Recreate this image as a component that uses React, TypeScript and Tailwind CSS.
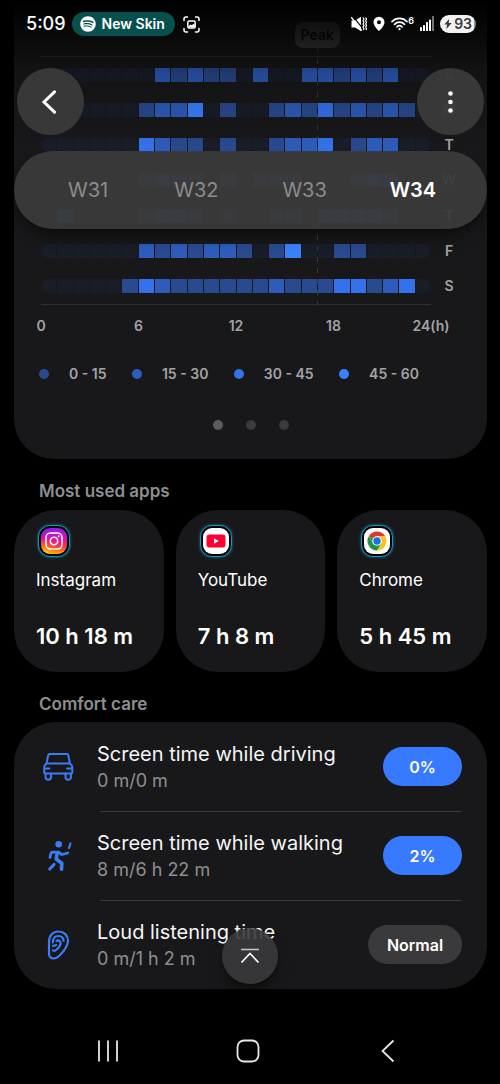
import React, { useState } from 'react';
import { FaSpotify } from 'react-icons/fa';

// One digit per hour: 0 = no use, 1-4 = legend buckets
const usage = [
  { day: 'S', hours: '000000021211020022121200' },
  { day: 'M', hours: '000000122401001213121210' },
  { day: 'T', hours: '000000321101001223012200' },
  { day: 'W', hours: '000000121101011100013200' },
  { day: 'T', hours: '030000122101001102222100' },
  { day: 'F', hours: '000000212122101400110000' },
  { day: 'S', hours: '000001321111112111331230' },
];

const levelColors = ['bg-[#181d28]', 'bg-[#294a8f]', 'bg-[#2d5cbb]', 'bg-[#3472ec]', 'bg-[#3a80ff]'];
const legend = ['0 - 15', '15 - 30', '30 - 45', '45 - 60'];
const ticks = ['0', '6', '12', '18', '24(h)'];
const weeks = ['W31', 'W32', 'W33', 'W34'];
const peakHour = 17;

function StatusBar() {
  return (
    <div className="flex h-6 items-center justify-between pl-[26px] pr-6 text-white">
      <div className="flex items-center">
        <span className="text-lg font-medium leading-6">5:09</span>
        <span className="ml-1.5 flex h-6 items-center gap-1.5 rounded-full bg-[#07504d] pl-2 pr-2.5">
          <FaSpotify size={16} />
          <span className="text-sm font-semibold leading-6">New Skin</span>
        </span>
        <svg className="ml-2" width="17" height="17" viewBox="0 0 17 17" fill="none" stroke="currentColor" strokeWidth="1.5" strokeLinecap="round">
          <path d="M1 4.500V3a2 2 0 0 1 2-2h1.500M12.500 1H14a2 2 0 0 1 2 2v1.500M16 12.500V14a2 2 0 0 1-2 2h-1.500M4.500 16H3a2 2 0 0 1-2-2v-1.500" />
          <rect x="4.800" y="5" width="7.400" height="7" rx="1.500" />
          <path d="M5.500 10.200l2-1.800 1.400.9 1.600-1.600 1.400 1.300v2.200H5.500z" fill="currentColor" stroke="none" />
        </svg>
      </div>
      <div className="flex items-center gap-1.5">
        <svg width="16" height="16" viewBox="0 0 16 16" fill="none" stroke="currentColor" strokeWidth="1.5">
          <path d="M.5 4.500h3.700L10 .8v14.400L4.200 11.500H.5z" fill="currentColor" stroke="none" />
          <path d="M1.800.2l10.500 13" stroke="#050505" strokeWidth="1.200" />
          <path d="M.2 1.200L10.800 14.600" strokeWidth="1.400" />
          <path d="M12 1.500l1 1.600-1 1.600 1 1.600-1 1.600 1 1.600-1 1.600 1 1.600-.6 1.400M14.600 1.500l1 1.600-1 1.600 1 1.600-1 1.600 1 1.600-1 1.600 1 1.600-.6 1.400" strokeWidth="1.200" />
        </svg>
        <svg width="12" height="16" viewBox="0 0 12 16">
          <path d="M6 .8A5.400 5.400 0 0 0 .5 6.200C.5 10.200 6 15 6 15s5.500-4.800 5.500-8.800A5.400 5.400 0 0 0 6 .8zm0 3.500a2 2 0 1 1 0 4 2 2 0 0 1 0-4z" fill="currentColor" />
        </svg>
        <span className="flex items-start">
          <svg width="17" height="16" viewBox="0 0 17 16" fill="none" stroke="currentColor" strokeWidth="1.700" strokeLinecap="round">
            <path d="M1 5.600a10.500 10.500 0 0 1 15 0M3.500 8.300a7 7 0 0 1 10 0M6 10.900a3.600 3.600 0 0 1 5 0" />
            <circle cx="8.500" cy="13.200" r="1.100" fill="currentColor" stroke="none" />
          </svg>
          <span className="text-[9px] font-semibold leading-[9px]">6</span>
        </span>
        <svg width="14" height="16" viewBox="0 0 14 16" fill="currentColor">
          <rect x="0" y="11" width="2" height="4" rx=".5" />
          <rect x="3" y="9" width="2" height="6" rx=".5" />
          <rect x="6" y="6" width="2" height="9" rx=".5" />
          <rect x="9" y="3.500" width="2" height="11.500" rx=".5" />
          <rect x="12" y="0" width="2" height="15" rx=".5" opacity=".45" />
        </svg>
        <span className="flex h-[18px] items-center gap-0.5 rounded-full bg-linear-to-r from-[#f2f2f2] from-94% to-[#8d8d8d] to-94% px-1 text-[#3a3a3a]">
          <svg width="8" height="10" viewBox="0 0 8 10">
            <path d="M5.200 0L.2 5.600h2.900L2.400 10l5.400-6H4.700z" fill="currentColor" />
          </svg>
          <span className="text-sm font-semibold leading-[18px]">93</span>
        </span>
      </div>
    </div>
  );
}

function UsageChart() {
  return (
    <section className="rounded-b-[40px] bg-[#18181a] pb-[29px] pt-[22px]">
      <div className="pl-[27px] pr-5">
        <div className="relative mr-9 pt-[34px]">
          {/* Peak marker */}
          <div
            className="absolute inset-y-0 z-10 flex w-0 flex-col items-center"
            style={{ left: `${(peakHour / 24) * 100}%` }}
          >
            <span className="rounded-lg bg-[#3e3e40] px-1.5 text-sm font-semibold leading-[26px] text-[#0a0a0a]">Peak</span>
            <span className="w-px flex-1 bg-[repeating-linear-gradient(to_bottom,#38383a_0_5px,transparent_5px_11px)]" />
          </div>
          <div className="grid h-[249px] grid-rows-7 border-y border-[#2e2e30]">
            {usage.map((row, i) => (
              <div key={i} className="-mr-9 flex items-center">
                <div className="grid h-3.5 flex-1 grid-cols-[repeat(24,minmax(0,1fr))] gap-px overflow-hidden rounded-full">
                  {row.hours.split('').map((level, h) => (
                    <span key={h} className={levelColors[Number(level)]} />
                  ))}
                </div>
                <span className="w-9 text-center text-sm font-semibold leading-5 text-[#a3a3a5]">{row.day}</span>
              </div>
            ))}
          </div>
        </div>
        <div className="mr-9 mt-[11px] flex justify-between text-sm font-semibold leading-5 text-[#a3a3a5]">
          {ticks.map(t => (
            <span key={t} className="flex w-0 justify-center">{t}</span>
          ))}
        </div>
      </div>

      {/* Legend */}
      <div className="mt-7 flex justify-between pl-[25px] pr-[68px]">
        {legend.map((label, i) => (
          <div key={label} className="flex items-center gap-5">
            <span className={`size-2.5 rounded-full ${levelColors[i + 1]}`} />
            <span className="text-sm font-semibold leading-5 text-[#a3a3a5]">{label}</span>
          </div>
        ))}
      </div>

      {/* Page dots */}
      <div className="mt-9 flex justify-center gap-[23px]">
        <span className="size-2.5 rounded-full bg-[#5c5c5e]" />
        <span className="size-2.5 rounded-full bg-[#3a3a3c]" />
        <span className="size-2.5 rounded-full bg-[#3a3a3c]" />
      </div>
    </section>
  );
}

function InstagramIcon() {
  return (
    <svg width="26" height="26" viewBox="0 0 26 26" fill="none">
      <defs>
        <linearGradient id="igBase" x1="0" y1="0" x2="0" y2="1">
          <stop offset="0" stopColor="#8a1ff0" />
          <stop offset=".45" stopColor="#e6109c" />
          <stop offset=".75" stopColor="#ff3d3d" />
          <stop offset="1" stopColor="#ffb300" />
        </linearGradient>
        <radialGradient id="igGlow" cx=".1" cy="1" r=".6">
          <stop offset="0" stopColor="#ffd500" />
          <stop offset="1" stopColor="#ff7a00" stopOpacity="0" />
        </radialGradient>
      </defs>
      <rect width="26" height="26" rx="9" fill="url(#igBase)" />
      <rect width="26" height="26" rx="9" fill="url(#igGlow)" />
      <rect x="5" y="5" width="16" height="16" rx="4.500" stroke="#fff" strokeWidth="1.500" />
      <circle cx="13" cy="13" r="3.700" stroke="#fff" strokeWidth="1.500" />
      <circle cx="17.700" cy="8.300" r="1" fill="#fff" />
    </svg>
  );
}

function YouTubeIcon() {
  return (
    <svg width="26" height="26" viewBox="0 0 26 26">
      <rect width="26" height="26" rx="9" fill="#fff" />
      <rect x="3.500" y="6.500" width="19" height="13" rx="3" fill="#ff0033" />
      <path d="M11 10.300v5.400l4.700-2.700z" fill="#fff" />
    </svg>
  );
}

function ChromeIcon() {
  return (
    <svg width="26" height="26" viewBox="0 0 26 26">
      <rect width="26" height="26" rx="9" fill="#fff" />
      <path d="M13 13L4.770 8.250A9.500 9.500 0 0 1 21.230 8.250H13z" fill="#db3a2e" />
      <path d="M13 13L21.230 8.250A9.500 9.500 0 0 1 13 22.500l4.110-7.120z" fill="#fcc31e" />
      <path d="M13 8.250h8.230L17.110 15.380 13 13z" fill="#fcc31e" />
      <path d="M13 13l4.110 2.380L13 22.500A9.500 9.500 0 0 1 4.770 8.250l4.120 7.130z" fill="#229342" />
      <path d="M4.770 8.250l4.120 7.130L13 13z" fill="#229342" />
      <circle cx="13" cy="13" r="4.750" fill="#fff" />
      <circle cx="13" cy="13" r="3.700" fill="#1a6fe8" />
    </svg>
  );
}

const apps = [
  { name: 'Instagram', time: '10 h 18 m', icon: <InstagramIcon /> },
  { name: 'YouTube', time: '7 h 8 m', icon: <YouTubeIcon /> },
  { name: 'Chrome', time: '5 h 45 m', icon: <ChromeIcon /> },
];

function CarIcon() {
  return (
    <svg width="32" height="32" viewBox="0 0 32 32" fill="none" stroke="#3b7cf5" strokeWidth="2" strokeLinejoin="round" strokeLinecap="round">
      <path d="M4.500 12.500L6.200 4.300Q6.500 3 7.800 3h16.900q1.300 0 1.600 1.300L28 12.500z" />
      <path d="M4.500 12.500Q2.200 14 2.200 16.500v4.700q0 1.300 1.300 1.300H29q1.300 0 1.300-1.300v-4.700Q30.300 14 28 12.500" />
      <path d="M2.500 17.500H7.500M30 17.500H25" />
      <path d="M3.500 22.500V26a2.700 2.700 0 0 0 5.500 0v-3.500M23.500 22.500V26a2.700 2.700 0 0 0 5.500 0v-3.500" />
    </svg>
  );
}

function WalkIcon() {
  return (
    <svg width="32" height="32" viewBox="0 0 32 32" fill="none" stroke="#3b7cf5" strokeWidth="3" strokeLinejoin="round" strokeLinecap="round">
      <circle cx="16.700" cy="4.200" r="3.300" fill="#3b7cf5" stroke="none" />
      <path d="M8 17.500l.8-3.600q.4-1.700 2.200-1.700h5.500l3.300 2.300 6-1.500" strokeWidth="2.800" />
      <path d="M15.300 13l-1.100 6 5.600 4.300-.3 6" strokeWidth="3.600" />
      <path d="M12 24.500L7.800 29" strokeWidth="3.200" />
      <path d="M28.500 3.500l-1.500 4.500" strokeWidth="2.200" />
    </svg>
  );
}

function EarIcon() {
  return (
    <svg width="32" height="32" viewBox="0 0 32 32" fill="none" stroke="#3b7cf5" strokeWidth="2.200" strokeLinejoin="round" strokeLinecap="round">
      <path d="M7 13C7 6.500 11 2.500 16.500 2.500S26 6.500 26 11.500c0 4-1.800 7-4.500 10.500-2.800 3.700-5.500 7.500-9.500 7.500-3.200 0-5-2-5-5z" />
      <path d="M10.800 13.500C10.800 9.500 13 7 16.500 7c3 0 5.200 2 5 4.800" />
      <path d="M14.500 12c2.800-1.600 4.800.8 3.900 3.700-.8 2.700-2.900 4.300-4.200 5.300-1.200.9-2.600.8-3.200.2" />
      <path d="M11 17l3.200-1" />
    </svg>
  );
}

const careItems = [
  { title: 'Screen time while driving', detail: '0 m/0 m', badge: '0%', icon: <CarIcon />, badgeStyle: 'w-[79px] bg-[#387aff]' },
  { title: 'Screen time while walking', detail: '8 m/6 h 22 m', badge: '2%', icon: <WalkIcon />, badgeStyle: 'w-[79px] bg-[#387aff]' },
  { title: 'Loud listening time', detail: '0 m/1 h 2 m', badge: 'Normal', icon: <EarIcon />, badgeStyle: 'w-[94px] bg-[#3a3a3c]' },
];

export default function App() {
  const [week, setWeek] = useState('W34');

  return (
    <div className="relative flex min-h-screen flex-col bg-black font-['Inter',sans-serif]">
      <main className="pl-3.5 pr-[13px]">
        <UsageChart />

        <h2 className="mt-5 px-[25px] text-[17px] font-semibold leading-6 text-[#8f8f91]">Most used apps</h2>
        <div className="mt-[7px] grid grid-cols-3 gap-3">
          {apps.map(app => (
            <button key={app.name} type="button" className="rounded-[42px] bg-[#18181a] px-[22px] pb-[22px] pt-[15px] text-left text-white">
              <span className="ml-0.5 flex size-8 items-center justify-center rounded-xl border border-[#1f93b8] bg-black shadow-[0_0_3px_#1286ad]">
                {app.icon}
              </span>
              <span className="mt-[11px] block text-[17px] leading-6">{app.name}</span>
              <span className="mt-[30px] block whitespace-nowrap text-[22px] font-semibold leading-7">{app.time}</span>
            </button>
          ))}
        </div>

        <h2 className="mt-5 px-[25px] text-[17px] font-semibold leading-6 text-[#8f8f91]">Comfort care</h2>
        <ul className="mt-1.5 rounded-[42px] bg-[#18181a] pl-7 pr-[25px]">
          {careItems.map((item, i) => (
            <li key={item.title} className="relative flex h-[89px] items-center">
              {i > 0 && <span className="absolute left-[58px] right-0 top-0 h-px bg-[#3a3a3c]" />}
              {item.icon}
              <div className="ml-[23px] flex-1 pt-0.5">
                <p className="text-xl leading-[26px] text-[#f5f5f5]">{item.title}</p>
                <p className="text-lg leading-7 text-[#8f8f91]">{item.detail}</p>
              </div>
              <span className={`flex h-[39px] items-center justify-center rounded-full text-base font-semibold text-white ${item.badgeStyle}`}>
                {item.badge}
              </span>
            </li>
          ))}
        </ul>
      </main>

      {/* System navigation */}
      <nav className="mt-auto grid grid-cols-[216px_64px_216px] justify-center pb-[21px] pr-1 text-[#e8e8e8]">
        <button type="button" aria-label="Recents" className="flex justify-center">
          <svg width="24" height="24" viewBox="0 0 24 24" stroke="currentColor" strokeWidth="1.800">
            <path d="M3 1.500v21M12 1.500v21M21 1.500v21" />
          </svg>
        </button>
        <button type="button" aria-label="Home" className="flex justify-center">
          <svg width="24" height="24" viewBox="0 0 24 24" fill="none" stroke="currentColor" strokeWidth="1.800">
            <rect x="1.500" y="1.500" width="21" height="21" rx="6.500" />
          </svg>
        </button>
        <button type="button" aria-label="Back" className="flex justify-center">
          <svg width="24" height="24" viewBox="0 0 24 24" fill="none" stroke="currentColor" strokeWidth="1.800">
            <path d="M17.500 1.500L6.500 12l11 10.500" />
          </svg>
        </button>
      </nav>

      {/* Floating header over the scrolled content */}
      <header className="absolute inset-x-0 top-0 z-20 pt-3">
        <div className="pointer-events-none absolute inset-x-0 top-0 -z-10 h-[150px] bg-linear-to-b from-black via-black/20 to-transparent" />
        <StatusBar />
        <div className="mt-8 flex justify-between pl-[17px] pr-4">
          <button type="button" aria-label="Navigate up" className="flex size-[67px] items-center justify-center rounded-full bg-[#3a3a3a]/97 text-white">
            <svg width="24" height="24" viewBox="0 0 24 24" fill="none" stroke="currentColor" strokeWidth="3" strokeLinecap="round">
              <path d="M15.500 1.800L5 12l10.500 10.200" />
            </svg>
          </button>
          <button type="button" aria-label="More options" className="flex size-[67px] items-center justify-center rounded-full bg-[#3a3a3a]/97 text-white">
            <svg width="24" height="24" viewBox="0 0 24 24" fill="currentColor">
              <circle cx="11.500" cy="3.500" r="2.300" />
              <circle cx="11.500" cy="12" r="2.300" />
              <circle cx="11.500" cy="20.500" r="2.300" />
            </svg>
          </button>
        </div>
        <div className="ml-3.5 mr-[13px] mt-4 grid h-[78px] grid-cols-4 rounded-full bg-[#3a3a3a]/95 px-5 shadow-lg shadow-black/40">
          {weeks.map(w => (
            <button
              key={w}
              type="button"
              onClick={() => setWeek(w)}
              className={w === week ? 'text-xl font-semibold text-white' : 'text-xl text-[#8c8c8c]'}
            >
              {w}
            </button>
          ))}
        </div>
      </header>

      {/* Scroll to top */}
      <button type="button" aria-label="Go to top" className="absolute bottom-[100px] left-1/2 z-10 flex size-14 -translate-x-1/2 items-center justify-center rounded-full bg-[#3a3a3c]/90 text-white shadow-lg shadow-black/40">
        <svg width="24" height="24" viewBox="0 0 24 24" fill="none" stroke="currentColor" strokeWidth="1.600">
          <path d="M3 5.500h18" opacity=".7" />
          <path d="M3.500 18.500l8.500-9 8.500 9" />
        </svg>
      </button>
    </div>
  );
}
